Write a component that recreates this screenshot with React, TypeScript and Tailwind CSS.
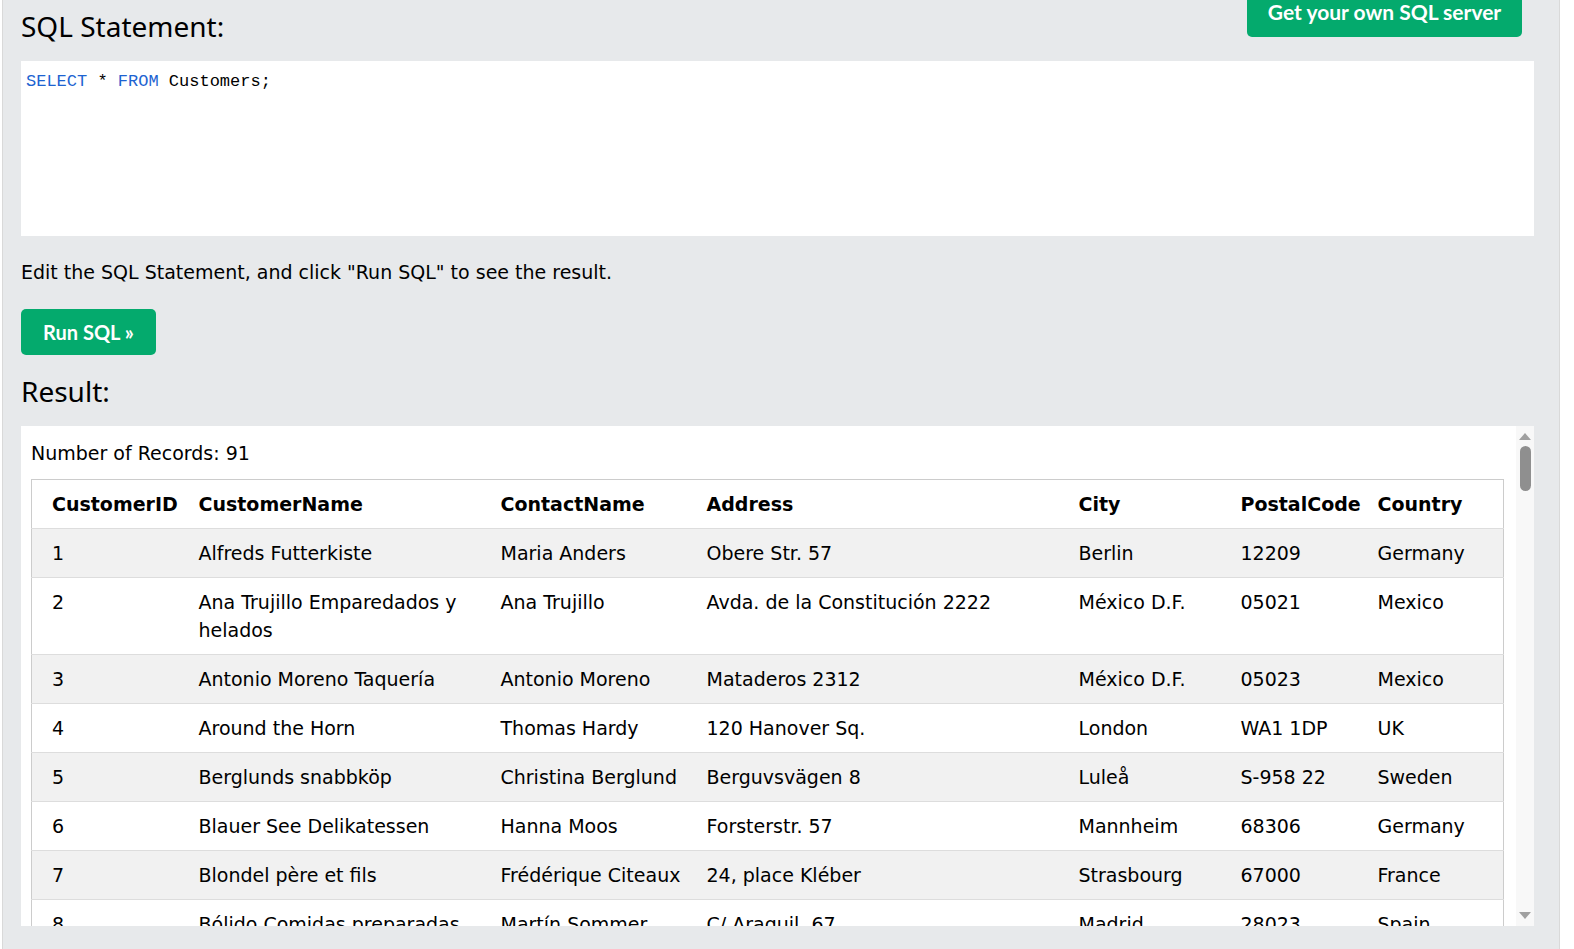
const rows: string[][] = [
  ["1", "Alfreds Futterkiste", "Maria Anders", "Obere Str. 57", "Berlin", "12209", "Germany"],
  ["2", "Ana Trujillo Emparedados y helados", "Ana Trujillo", "Avda. de la Constitución 2222", "México D.F.", "05021", "Mexico"],
  ["3", "Antonio Moreno Taquería", "Antonio Moreno", "Mataderos 2312", "México D.F.", "05023", "Mexico"],
  ["4", "Around the Horn", "Thomas Hardy", "120 Hanover Sq.", "London", "WA1 1DP", "UK"],
  ["5", "Berglunds snabbköp", "Christina Berglund", "Berguvsvägen 8", "Luleå", "S-958 22", "Sweden"],
  ["6", "Blauer See Delikatessen", "Hanna Moos", "Forsterstr. 57", "Mannheim", "68306", "Germany"],
  ["7", "Blondel père et fils", "Frédérique Citeaux", "24, place Kléber", "Strasbourg", "67000", "France"],
  ["8", "Bólido Comidas preparadas", "Martín Sommer", "C/ Araquil, 67", "Madrid", "28023", "Spain"],
  ["9", "Bon app'", "Laurence Lebihans", "12, rue des Bouchers", "Marseille", "13008", "France"],
];

const headers = ["CustomerID", "CustomerName", "ContactName", "Address", "City", "PostalCode", "Country"];
const widths = [157, 302, 206, 372, 162, 137, 136];

// fake classic scrollbar down the right side of the result box
function ScrollBar() {
  return (
    <div className="flex w-[18px] shrink-0 flex-col items-center bg-[#f8f8f8]">
      <svg width="12" height="7" viewBox="0 0 12 7" className="mt-[7px]">
        <path d="M6 0 L12 7 L0 7 Z" fill="#a0a0a0" />
      </svg>
      <div className="mt-[6px] h-[45px] w-[11px] rounded-full bg-[#8f8f8f]" />
      <div className="flex-1" />
      <svg width="12" height="7" viewBox="0 0 12 7" className="mb-[7px]">
        <path d="M0 0 L12 0 L6 7 Z" fill="#a0a0a0" />
      </svg>
    </div>
  );
}

export default function App() {
  const body = "font-['DejaVu_Sans','Verdana',sans-serif]";
  return (
    <div className="flex min-h-[949px] w-full bg-white">
      <div className="ml-[2px] flex w-[1558px] shrink-0 flex-col border-r border-l border-[#d9d9d9] bg-[#e7e9eb] pl-[18px] pr-[25px] text-black">
        <div className="flex items-start justify-between">
          <h2 className="mt-[8px] font-['Noto_Sans','Open_Sans',sans-serif] text-[28px] leading-[36px] text-black">
            SQL Statement:
          </h2>
          <div className="-mt-[10px] mr-[12px] flex h-[47px] w-[275px] items-center justify-center rounded-[5px] bg-[#04AA6D] pb-[3px] font-['Lato','Open_Sans',sans-serif] text-[21px] font-bold text-white">
            Get your own SQL server
          </div>
        </div>

        <div className="mt-[17px] h-[175px] bg-white pl-[5px] pt-[11px] font-['Liberation_Mono','DejaVu_Sans_Mono',monospace] text-[17px] leading-[20px] text-black">
          <span className="text-[#1d63d1]">SELECT</span> * <span className="text-[#1d63d1]">FROM</span> Customers;
        </div>

        <p className={`${body} mt-[22px] text-[19px] leading-[28px]`}>
          Edit the SQL Statement, and click "Run SQL" to see the result.
        </p>

        <div className="mt-[23px]">
          <button className="h-[46px] w-[135px] rounded-[5px] bg-[#04AA6D] font-['Lato','Open_Sans',sans-serif] text-[20px] font-bold text-white">
            Run SQL »
          </button>
        </div>

        <h2 className="mt-[18px] font-['Noto_Sans','Open_Sans',sans-serif] text-[28px] leading-[36px]">
          Result:
        </h2>

        <div className="mt-[17px] flex h-[500px] overflow-hidden bg-white">
          <div className="flex-1 overflow-hidden pl-[10px]">
            <p className={`${body} mt-[13px] text-[19px] leading-[28px]`}>Number of Records: 91</p>
            <table className={`${body} mt-[12px] table-fixed border-collapse border border-[#cccccc] text-[19px]`}>
              <colgroup>
                {widths.map((w, i) => (
                  <col key={i} style={{ width: w }} />
                ))}
              </colgroup>
              <thead>
                <tr className="bg-white">
                  {headers.map((h, i) => (
                    <th
                      key={h}
                      className={`py-[10px] text-left font-bold leading-[28px] ${i === 0 ? "pl-[20px]" : "pl-[10px]"} pr-[6px]`}
                    >
                      {h}
                    </th>
                  ))}
                </tr>
              </thead>
              <tbody>
                {rows.map((r, ri) => (
                  <tr key={ri} className={`border-t border-[#dddddd] ${ri % 2 === 0 ? "bg-[#f1f1f1]" : "bg-white"}`}>
                    {r.map((c, ci) => (
                      <td
                        key={ci}
                        className={`py-[10px] align-top leading-[28px] ${ci === 0 ? "pl-[20px]" : "pl-[10px]"} pr-[6px]`}
                      >
                        {c}
                      </td>
                    ))}
                  </tr>
                ))}
              </tbody>
            </table>
          </div>
          <ScrollBar />
        </div>
      </div>
      <div className="flex-1 bg-white" />
    </div>
  );
}
